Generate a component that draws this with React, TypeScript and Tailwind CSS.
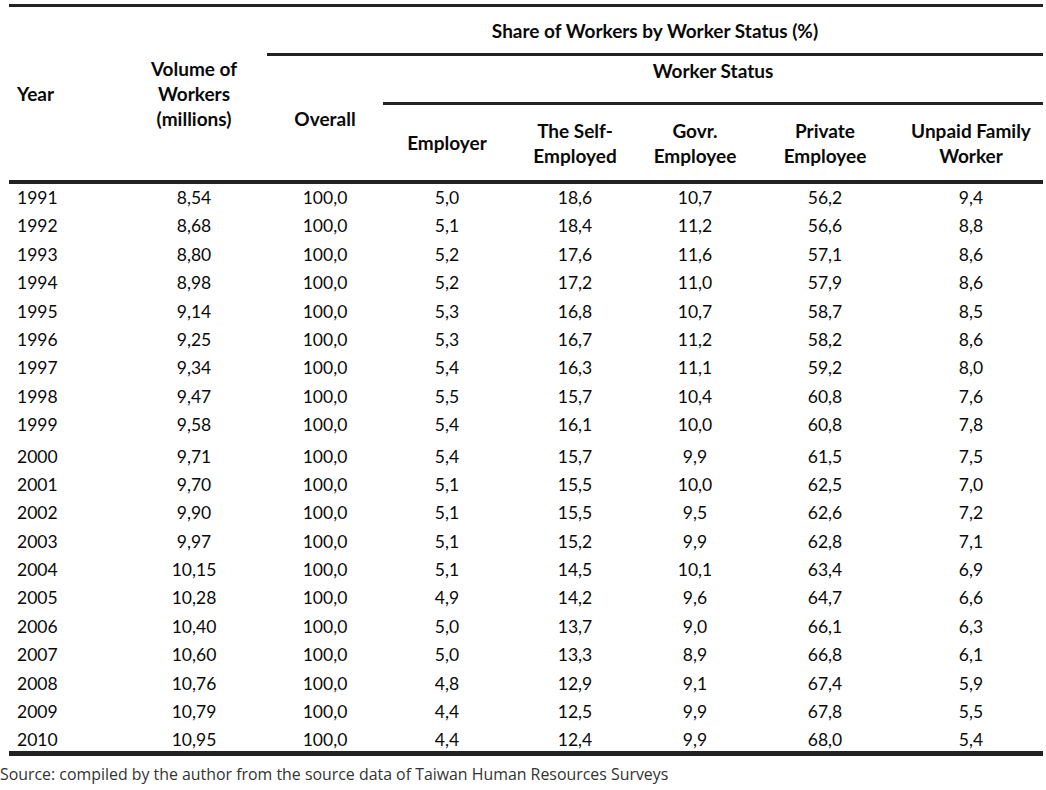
import React from 'react';

type Row = [string, string, string, string, string, string, string, string];

const rows: Row[] = [
  ['1991', '8,54', '100,0', '5,0', '18,6', '10,7', '56,2', '9,4'],
  ['1992', '8,68', '100,0', '5,1', '18,4', '11,2', '56,6', '8,8'],
  ['1993', '8,80', '100,0', '5,2', '17,6', '11,6', '57,1', '8,6'],
  ['1994', '8,98', '100,0', '5,2', '17,2', '11,0', '57,9', '8,6'],
  ['1995', '9,14', '100,0', '5,3', '16,8', '10,7', '58,7', '8,5'],
  ['1996', '9,25', '100,0', '5,3', '16,7', '11,2', '58,2', '8,6'],
  ['1997', '9,34', '100,0', '5,4', '16,3', '11,1', '59,2', '8,0'],
  ['1998', '9,47', '100,0', '5,5', '15,7', '10,4', '60,8', '7,6'],
  ['1999', '9,58', '100,0', '5,4', '16,1', '10,0', '60,8', '7,8'],
  ['2000', '9,71', '100,0', '5,4', '15,7', '9,9', '61,5', '7,5'],
  ['2001', '9,70', '100,0', '5,1', '15,5', '10,0', '62,5', '7,0'],
  ['2002', '9,90', '100,0', '5,1', '15,5', '9,5', '62,6', '7,2'],
  ['2003', '9,97', '100,0', '5,1', '15,2', '9,9', '62,8', '7,1'],
  ['2004', '10,15', '100,0', '5,1', '14,5', '10,1', '63,4', '6,9'],
  ['2005', '10,28', '100,0', '4,9', '14,2', '9,6', '64,7', '6,6'],
  ['2006', '10,40', '100,0', '5,0', '13,7', '9,0', '66,1', '6,3'],
  ['2007', '10,60', '100,0', '5,0', '13,3', '8,9', '66,8', '6,1'],
  ['2008', '10,76', '100,0', '4,8', '12,9', '9,1', '67,4', '5,9'],
  ['2009', '10,79', '100,0', '4,4', '12,5', '9,9', '67,8', '5,5'],
  ['2010', '10,95', '100,0', '4,4', '12,4', '9,9', '68,0', '5,4'],
];

const cols = 'grid grid-cols-[112px_146px_116px_128px_128px_112px_148px_144px]';

const App: React.FC = () => {
  return (
    <div className="w-[1046px] h-[790px] bg-white text-[#0a0a0a] pt-[4px]" style={{ fontFamily: 'Lato, "Open Sans", sans-serif' }}>
      <div className="ml-[9px] w-[1034px]">
        {/* header */}
        <div className={`${cols} grid-rows-[49px_49px_75px] border-t-[3px] border-b-4 border-[#222] text-[19px] font-bold leading-[25px]`}>
          <div className="row-span-3 flex items-center pl-[8px]">Year</div>
          <div className="row-span-3 flex items-center justify-center text-center">
            Volume of<br />Workers<br />(millions)
          </div>
          <div className="col-span-6 flex items-center justify-center border-b-[3px] border-[#222]">
            Share of Workers by Worker Status (%)
          </div>
          <div className="row-span-2 flex items-center justify-center">Overall</div>
          <div className="col-span-5 flex justify-center pt-[2px] border-b-[3px] border-[#222]">Worker Status</div>
          <div className="flex items-center justify-center text-center">Employer</div>
          <div className="flex items-center justify-center text-center">The Self-<br />Employed</div>
          <div className="flex items-center justify-center text-center">Govr.<br />Employee</div>
          <div className="flex items-center justify-center text-center">Private<br />Employee</div>
          <div className="flex items-center justify-center text-center">Unpaid Family<br />Worker</div>
        </div>

        {/* body */}
        <div className="border-b-[5px] border-[#222] text-[17.5px]">
          {rows.map((r, i) => {
            const h = r[0] === '2000' ? 'h-[31.4px] pt-[3px]' : i === rows.length - 1 ? 'h-[25px]' : 'h-[28.4px]';
            return (
              <div key={r[0]} className={`${cols} ${h} leading-[28.4px]`}>
                <div className="pl-[8px]">{r[0]}</div>
                {r.slice(1).map((v, j) => (
                  <div key={j} className="text-center">{v}</div>
                ))}
              </div>
            );
          })}
        </div>
      </div>
      <p className="mt-[7px] text-[15.9px] leading-[22px] text-[#333]" style={{ fontFamily: '"Open Sans", sans-serif' }}>
        Source: compiled by the author from the source data of Taiwan Human Resources Surveys
      </p>
    </div>
  );
};

export default App;
